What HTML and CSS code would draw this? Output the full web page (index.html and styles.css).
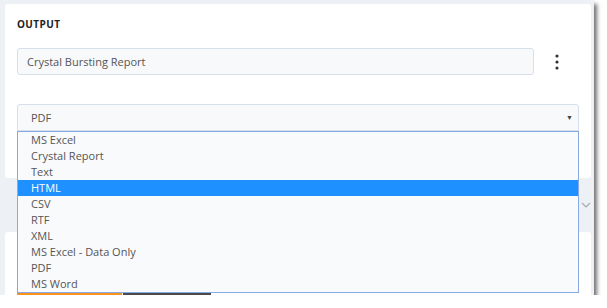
FILE: index.html
```html
<!DOCTYPE html>
<html lang="en">
<head>
  <meta charset="UTF-8" />
  <meta name="viewport" content="width=device-width, initial-scale=1" />
  <title>Output</title>
  <link rel="stylesheet" href="styles.css">
</head>
<body>
<div class="window">

  <!-- Output settings card -->
  <section class="card output-card">
    <h3 class="card-title">OUTPUT</h3>

    <div class="name-row">
      <div class="text-input">Crystal Bursting Report</div>
      <button class="kebab" aria-label="More">
        <svg width="4" height="16" viewBox="0 0 4 16">
          <circle cx="2" cy="2" r="1.6" />
          <circle cx="2" cy="8" r="1.6" />
          <circle cx="2" cy="14" r="1.6" />
        </svg>
      </button>
    </div>

    <div class="select-wrap">
      <div class="select">
        <span>PDF</span>
        <span class="caret">&#9660;</span>
      </div>
      <ul class="options">
        <li>MS Excel</li>
        <li>Crystal Report</li>
        <li>Text</li>
        <li class="active">HTML</li>
        <li>CSV</li>
        <li>RTF</li>
        <li>XML</li>
        <li>MS Excel - Data Only</li>
        <li>PDF</li>
        <li>MS Word</li>
      </ul>
    </div>
  </section>

  <div class="section-bar">
    <svg class="chevron" width="10" height="6" viewBox="0 0 10 6">
      <polyline points="1,1 5,5 9,1" />
    </svg>
  </div>

  <!-- buttons sit under the open list, only their bottom edge shows -->
  <section class="card actions-card">
    <div class="btn-row">
      <button class="btn btn-orange" aria-label="New bursting"></button>
      <button class="btn btn-dark" aria-label="View log"></button>
    </div>
  </section>

</div>
</body>
</html>
```

FILE: styles.css
```css
body {
  margin: 0;
  background: #fff;
  font-family: 'Open Sans', 'Liberation Sans', Arial, sans-serif;
}

.window {
  position: relative;
  width: 594px;
  height: 295px;
  overflow: hidden;
  background: #edf0f4;
  box-shadow: 3px 4px 4px rgba(0, 0, 0, 0.55);
}

.card {
  background: #fff;
  margin: 4px 3px 0 5px;
  border-radius: 3px;
  padding: 13px 12px 0 12px;
}

.output-card {
  height: 161px;
}

.card-title {
  margin: 0;
  font-size: 10px;
  line-height: 14px;
  font-weight: 700;
  letter-spacing: 0.4px;
  color: #222;
}

.name-row {
  display: flex;
  margin-top: 17px;
}

.text-input {
  width: 497px;
  height: 25px;
  line-height: 25px;
  padding: 0 9px;
  background: #f7f9fb;
  border: 1px solid #d7dfea;
  border-radius: 3px;
  font-size: 11px;
  color: #555;
}

.kebab {
  flex: 1;
  border: none;
  background: none;
  padding: 0;
  display: flex;
  align-items: center;
  justify-content: center;
}
.kebab svg {
  fill: #333;
}

.select-wrap {
  position: relative;
  margin-top: 29px;
}

.select {
  display: flex;
  justify-content: space-between;
  align-items: center;
  height: 25px;
  padding: 0 5px 0 13px;
  background: #f8f9fb;
  border: 1px solid #d7dfea;
  border-radius: 3px 3px 0 0;
  font-size: 11px;
  color: #555;
}
.caret {
  font-size: 7px;
  color: #444;
}

.options {
  position: absolute;
  top: 27px;
  left: 0;
  right: 0;
  margin: 0;
  padding: 0;
  list-style: none;
  background: #f9fafc;
  border: 1px solid #89a9e4;
  z-index: 5;
}
.options li {
  height: 16px;
  line-height: 16px;
  padding-left: 13px;
  font-size: 11px;
  color: #555;
}
.options li.active {
  background: #1e90ff;
  color: #fff;
}

.section-bar {
  height: 54px;
  display: flex;
  align-items: center;
  justify-content: flex-end;
  padding-right: 3px;
}
.chevron {
  fill: none;
  stroke: #a5a9b0;
  stroke-width: 1.2;
}

.actions-card {
  margin-top: 0;
  height: 80px;
  padding-top: 46px;
}

.btn-row {
  display: flex;
}
.btn {
  height: 28px;
  border: none;
}
.btn-orange {
  width: 105px;
  background: #f7931e;
}
.btn-dark {
  width: 88px;
  margin-left: 1px;
  background: #4b4b4b;
}
```
